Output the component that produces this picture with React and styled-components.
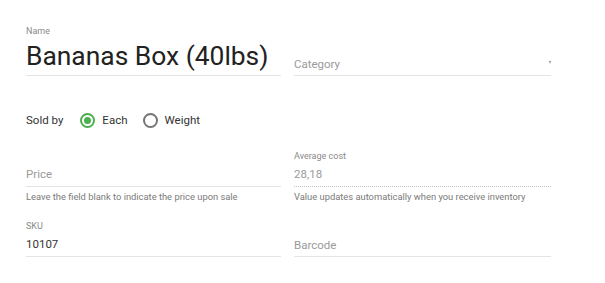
import styled, { createGlobalStyle } from 'styled-components';

const GlobalStyle = createGlobalStyle`
	body {
		margin: 0;
		background: #fff;
		font-family: Roboto, 'Liberation Sans', sans-serif;
	}
`;

export default function App() {
	return (
		<>
			<GlobalStyle />
			<Page>
				<Row>
					<Field>
						<Label>Name</Label>
						<TitleInput>Bananas Box (40lbs)</TitleInput>
					</Field>
					<Field>
						<Input $tight>
							<Placeholder>Category</Placeholder>
							<Caret />
						</Input>
					</Field>
				</Row>

				<SoldBy>
					<SoldLabel>Sold by</SoldLabel>
					<Option>
						<Radio checked />
						Each
					</Option>
					<Option>
						<Radio />
						Weight
					</Option>
				</SoldBy>

				<Row $top='20px'>
					<Field>
						<Input>
							<Placeholder>Price</Placeholder>
						</Input>
						<Helper>Leave the field blank to indicate the price upon sale</Helper>
					</Field>
					<Field>
						<Label>Average cost</Label>
						<Input $dotted>
							<Value $muted>28,18</Value>
						</Input>
						<Helper>Value updates automatically when you receive inventory</Helper>
					</Field>
				</Row>

				<Row $top='17px'>
					<Field>
						<Label>SKU</Label>
						<Input>
							<Value>10107</Value>
						</Input>
					</Field>
					<Field>
						<Input $tight>
							<Placeholder>Barcode</Placeholder>
						</Input>
					</Field>
				</Row>
			</Page>
		</>
	);
}

const Page = styled.div`
	padding: 25px 0 0 26px;
	width: 525px;
`;

const Row = styled.div`
	display: grid;
	grid-template-columns: 255px 257px;
	column-gap: 13px;
	align-items: end;
	margin-top: ${(props) => props.$top || '0'};
`;

const Field = styled.div`
	display: flex;
	flex-direction: column;
`;

const Label = styled.div`
	font-size: 9px;
	line-height: 12px;
	color: #8a8a8a;
`;

const TitleInput = styled.div`
	font-size: 26.4px;
	line-height: 38px;
	color: #222;
	border-bottom: 1px solid #e4e4e4;
	white-space: nowrap;
`;

const Input = styled.div`
	position: relative;
	height: 25px;
	padding-top: ${(props) => (props.$tight ? '2px' : '0')};
	box-sizing: border-box;
	display: flex;
	align-items: center;
	border-bottom: 1px ${(props) => (props.$dotted ? 'dotted #c4c4c4' : 'solid #e4e4e4')};
`;

const Placeholder = styled.span`
	font-size: 11.5px;
	color: #9a9a9a;
`;

const Value = styled.span`
	font-size: 11.5px;
	color: ${(props) => (props.$muted ? '#9a9a9a' : '#333')};
`;

const Caret = styled.span`
	position: absolute;
	right: 0;
	top: 10px;
	border-left: 1.5px solid transparent;
	border-right: 1.5px solid transparent;
	border-top: 3px solid #888;
`;

const Helper = styled.div`
	margin-top: 4px;
	font-size: 9.35px;
	line-height: 12px;
	color: #7a7a7a;
	white-space: nowrap;
`;

const SoldBy = styled.div`
	display: flex;
	align-items: center;
	height: 20px;
	margin-top: 34px;
	font-size: 11.5px;
	color: #333;
`;

const SoldLabel = styled.span`
	margin-right: 17px;
`;

const Option = styled.label`
	display: flex;
	align-items: center;
	gap: 7px;
	margin-right: 15px;
`;

const Radio = styled.span`
	box-sizing: border-box;
	width: 15px;
	height: 15px;
	border-radius: 50%;
	border: 2px solid ${(props) => (props.checked ? '#4caf50' : '#757575')};
	display: flex;
	align-items: center;
	justify-content: center;
	&::after {
		content: '';
		display: ${(props) => (props.checked ? 'block' : 'none')};
		width: 7px;
		height: 7px;
		border-radius: 50%;
		background: #4caf50;
	}
`;
